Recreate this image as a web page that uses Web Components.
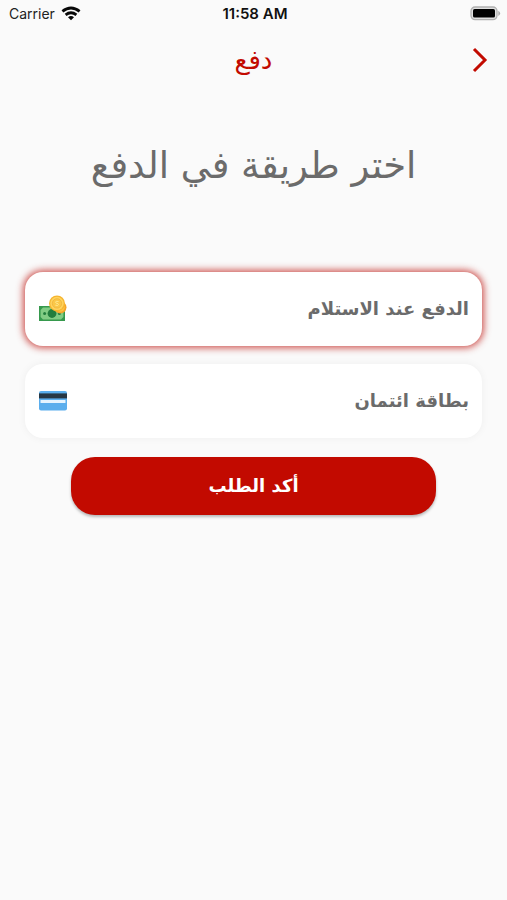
<!DOCTYPE html>
<html lang="ar" dir="rtl">
<head>
<meta charset="utf-8">
<meta name="viewport" content="width=device-width, initial-scale=1">
<title>دفع</title>
<style>
  :root { --red: #c20a00; --grey: #6b6b6b; }
  body { margin: 0; min-height: 100vh; background: #fafafa; font-family: "DejaVu Sans", sans-serif; }
</style>
</head>
<body>
<payment-screen></payment-screen>

<script>
class BaseElement extends HTMLElement {
  connectedCallback() {
    if (this.shadowRoot) return;
    this.attachShadow({ mode: 'open' }).innerHTML = this.constructor.markup;
  }
}

class StatusBar extends BaseElement {
  static markup = `
    <style>
      :host { display: grid; grid-template-columns: 1fr auto 1fr; align-items: center; direction: ltr;
        height: 28px; padding: 0 6px 0 9px; font: 14px/20px Inter, sans-serif; color: #222; }
      .carrier { display: flex; align-items: center; gap: 6px; }
      .time { font-size: 15px; font-weight: 600; color: #111; }
      .battery { justify-self: end; }
      svg { display: block; }
    </style>
    <div class="carrier"><span>Carrier</span>
      <svg width="20" height="16" viewBox="0 0 20 16" fill="none" stroke="#080808" stroke-width="2.8" aria-hidden="true">
        <path d="M1.4 5.4Q10 -1.4 18.6 5.4"/><path d="M4.6 8.8Q10 4.6 15.4 8.8"/>
        <path d="M7 11.2Q10 8.8 13 11.2L10 14.2Z" fill="#080808" stroke="none"/>
      </svg>
    </div>
    <span class="time">11:58 AM</span>
    <svg class="battery" width="31" height="16" viewBox="0 0 31 16" aria-hidden="true">
      <rect x="1" y="1" width="26" height="12.6" rx="4" fill="#e0e0e0" stroke="#b0b0b0" stroke-width="1.3"/>
      <rect x="3" y="3" width="22" height="8.6" rx="1.6" fill="#000"/>
      <path d="M28.3 4.8Q32 7.4 28.3 10Z" fill="#aaa"/>
    </svg>`;
}

class AppHeader extends BaseElement {
  static markup = `
    <style>
      :host { display: grid; grid-template-columns: 1fr auto 1fr; align-items: center; height: 64px; padding: 0 12px; color: var(--red); }
      button { justify-self: start; display: grid; place-items: center; width: 30px; height: 40px; padding: 0; border: 0; background: none; color: inherit; cursor: pointer; }
      h1 { margin: 0; font-size: 26px; line-height: 32px; font-weight: 400; }
    </style>
    <button type="button" aria-label="رجوع">
      <svg width="16" height="26" viewBox="0 0 16 26" fill="none" stroke="currentColor" stroke-width="3" aria-hidden="true"><path d="M2 2L13 13L2 24"/></svg>
    </button>
    <h1><slot></slot></h1>`;
}

class CashIcon extends BaseElement {
  static markup = `
    <style>:host, svg { display: block; }</style>
    <svg width="28" height="28" viewBox="0 0 28 28" aria-hidden="true">
      <rect y="11" width="26" height="15" fill="#36994d"/>
      <path d="M4 12.6H22L24.4 15V22L22 24.4H4L1.6 22V15Z" fill="#82cc84"/>
      <circle cx="13" cy="18.5" r="4.4" fill="#237d3d"/>
      <circle cx="5.6" cy="18.5" r="1.5" fill="#237d3d"/><circle cx="20.4" cy="18.5" r="1.5" fill="#237d3d"/>
      <circle cx="21.3" cy="12.3" r="6.2" fill="#f5a52b"/><circle cx="21.3" cy="12.3" r="4.4" fill="#ffc342"/>
      <circle cx="18" cy="8.4" r="8" fill="#f6b530"/><circle cx="18" cy="8.4" r="6.7" fill="#ffd35c"/>
      <circle cx="18" cy="8.4" r="4.7" fill="#fbc748" stroke="#efb53d" stroke-width=".8"/>
      <path d="M19.6 6.6Q16.4 5.6 16.5 7.3C16.6 8.8 19.5 7.9 19.5 9.5Q19.5 11.1 16.3 10.2" fill="none" stroke="#ffe78c"/>
    </svg>`;
}

class CardIcon extends BaseElement {
  static markup = `
    <style>:host, svg { display: block; }</style>
    <svg width="28" height="28" viewBox="0 0 28 28" aria-hidden="true">
      <rect y="4" width="28" height="19.4" rx="2" fill="#5baeed"/>
      <path d="M0 6.4H28V11.4H0Z" fill="#263744"/>
      <rect x="1.5" y="13" width="25" height="3" rx=".5" fill="#e5f4ff"/>
    </svg>`;
}

class PaymentMethods extends BaseElement {
  static markup = `
    <style>
      :host { display: block; }
      fieldset { display: grid; gap: 18px; margin: 0; padding: 0; border: 0; min-width: 0; }
      label { position: relative; display: flex; align-items: center; justify-content: space-between; box-sizing: border-box;
        min-height: 74px; padding: 0 13px 0 14px; border-radius: 18px; background: #fff; color: var(--grey);
        font-size: 18px; line-height: 28px; font-weight: 700; cursor: pointer; box-shadow: 0 0 8px #0000000d; }
      label:has(input:checked) { box-shadow: 0 0 7px 2px #c0201ac0; }
      input { position: absolute; inset: 0; width: 100%; height: 100%; margin: 0; opacity: 0; cursor: pointer; }
    </style>
    <fieldset aria-label="طريقة الدفع">
      <label><input type="radio" name="method" value="cash" checked><span><slot name="cash"></slot></span><cash-icon></cash-icon></label>
      <label><input type="radio" name="method" value="card"><span><slot name="card"></slot></span><card-icon></card-icon></label>
    </fieldset>`;
}

class ConfirmButton extends BaseElement {
  static markup = `
    <style>
      :host { display: block; width: 80%; margin: 0 auto; }
      button { display: block; width: 100%; min-height: 58px; padding: 0; border: 0; border-radius: 24px; background: var(--red); color: #fff;
        font: 700 18px/28px "DejaVu Sans", sans-serif; box-shadow: 0 2px 3px #00000045; cursor: pointer; }
    </style>
    <button type="button"><slot></slot></button>`;
}

class PaymentScreen extends BaseElement {
  static markup = `
    <style>
      :host { display: block; }
      main { display: flex; flex-direction: column; padding: 44px 25px 0; }
      h2 { margin: 0 0 76px; text-align: center; color: var(--grey); font-size: 37px; line-height: 60px; font-weight: 400; }
      payment-methods { margin-bottom: 19px; }
    </style>
    <status-bar></status-bar>
    <app-header>دفع</app-header>
    <main>
      <h2>اختر طريقة في الدفع</h2>
      <payment-methods><span slot="cash">الدفع عند الاستلام</span><span slot="card">بطاقة ائتمان</span></payment-methods>
      <confirm-button>أكد الطلب</confirm-button>
    </main>`;
}

customElements.define('status-bar', StatusBar);
customElements.define('app-header', AppHeader);
customElements.define('cash-icon', CashIcon);
customElements.define('card-icon', CardIcon);
customElements.define('payment-methods', PaymentMethods);
customElements.define('confirm-button', ConfirmButton);
customElements.define('payment-screen', PaymentScreen);
</script>
</body>
</html>
